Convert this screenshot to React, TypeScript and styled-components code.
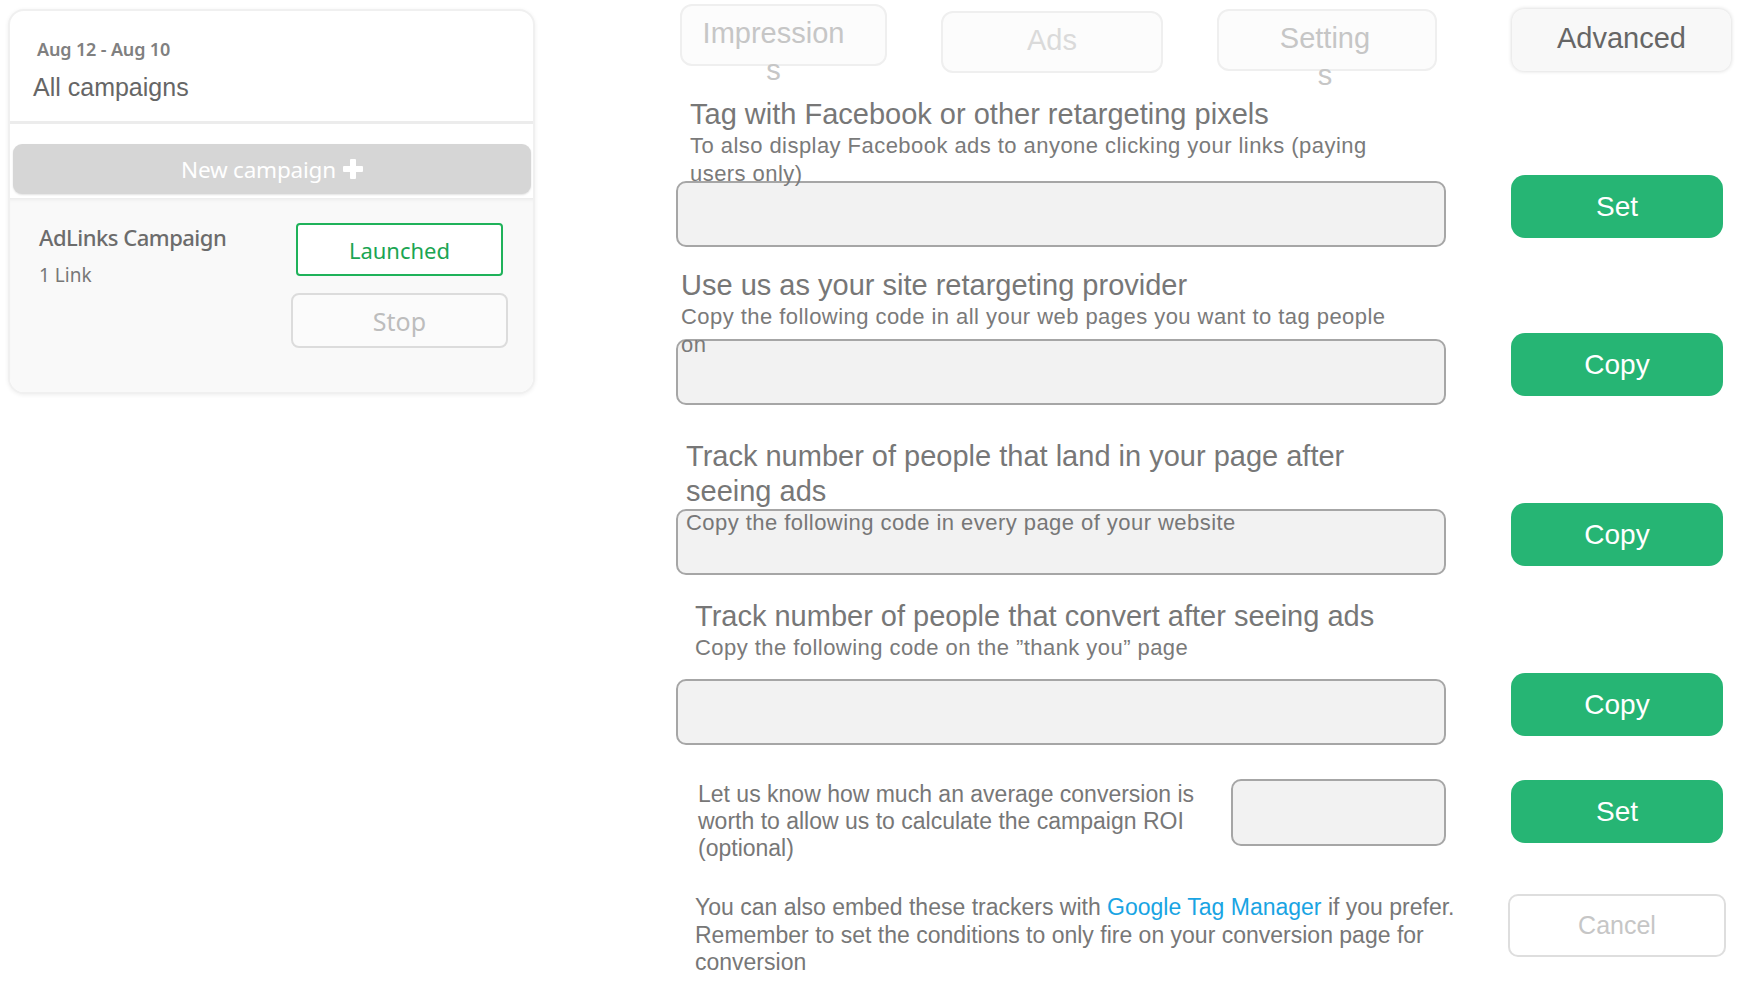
import React from "react";
import styled, { createGlobalStyle } from "styled-components";

const GlobalStyle = createGlobalStyle`
  html, body {
    margin: 0;
    padding: 0;
    background: #fff;
  }
  body {
    font-family: "Liberation Sans", Arial, sans-serif;
    color: #777;
  }
  * {
    box-sizing: border-box;
  }
`;

const condensed = `"Noto Sans", "Open Sans", sans-serif`;

const Page = styled.div`
  display: flex;
  align-items: flex-start;
  width: 1748px;
  height: 989px;
  overflow: hidden;
  padding-left: 8px;
`;

/* ---------- sidebar ---------- */

const Sidebar = styled.aside`
  width: 527px;
  margin-top: 9px;
  border: 2px solid #f0f0f0;
  border-radius: 16px;
  box-shadow: 0 1px 4px rgba(0, 0, 0, 0.07);
  background: #fff;
  overflow: hidden;
`;

const SidebarHeader = styled.header`
  height: 113px;
  padding: 27px 0 0 27px;
  border-bottom: 3px solid #ececec;
`;

const DateRange = styled.div`
  font-family: ${condensed};
  font-stretch: condensed;
  font-weight: 600;
  font-size: 18px;
  line-height: 22px;
  letter-spacing: -0.15px;
  color: #808080;
`;

const SidebarTitle = styled.div`
  margin: 12px 0 0 -4px;
  font-size: 25px;
  line-height: 30px;
  color: #666;
`;

const NewCampaign = styled.button`
  display: flex;
  align-items: center;
  justify-content: center;
  gap: 7px;
  width: calc(100% - 5px);
  height: 50px;
  margin: 20px 2px 0 3px;
  border: none;
  border-radius: 9px;
  background: #d6d6d6;
  box-shadow: 0 1px 2px rgba(0, 0, 0, 0.12);
  color: #fff;
  font-family: ${condensed};
  font-stretch: condensed;
  font-size: 22.5px;
  letter-spacing: -0.2px;
`;

const CampaignItem = styled.div`
  display: flex;
  justify-content: space-between;
  margin-top: 4px;
  padding: 25px 25px 44px 29px;
  background: #f9f9f9;
  box-shadow: inset 0 4px 4px -3px rgba(0, 0, 0, 0.08);
`;

const CampaignName = styled.div`
  font-family: ${condensed};
  font-stretch: condensed;
  font-weight: 500;
  font-size: 22px;
  line-height: 28px;
  letter-spacing: -0.5px;
  color: #6c6c6c;
`;

const CampaignMeta = styled.div`
  margin-top: 12px;
  font-family: ${condensed};
  font-stretch: condensed;
  font-size: 19px;
  line-height: 24px;
  color: #777;
`;

const ItemActions = styled.div`
  display: flex;
  flex-direction: column;
  align-items: center;
  gap: 17px;
  width: 217px;
`;

const StatusButton = styled.button<{ $variant: "launched" | "stop" }>`
  width: ${(p) => (p.$variant === "launched" ? 207 : 217)}px;
  height: ${(p) => (p.$variant === "launched" ? 53 : 55)}px;
  border: 2px solid ${(p) => (p.$variant === "launched" ? "#1fb25a" : "#dcdcdc")};
  border-radius: ${(p) => (p.$variant === "launched" ? 4 : 8)}px;
  background: ${(p) => (p.$variant === "launched" ? "#fff" : "#fbfbfb")};
  color: ${(p) => (p.$variant === "launched" ? "#1ba553" : "#bdbdbd")};
  font-family: ${condensed};
  font-stretch: condensed;
  font-size: ${(p) => (p.$variant === "launched" ? 22 : 25)}px;
`;

/* ---------- main panel ---------- */

const Main = styled.main`
  width: 1050px;
  margin-left: 141px;
`;

const Row = styled.div<{ $mt: number }>`
  display: grid;
  grid-template-columns: 770px 218px;
  column-gap: 62px;
  margin-top: ${(p) => p.$mt}px;
`;

const TabGroup = styled.div`
  display: flex;
  align-items: flex-start;
  justify-content: space-between;
  padding: 0 9px 0 4px;
`;

const Tab = styled.div<{
  $top: number;
  $width: number;
  $tone: string;
  $active?: boolean;
  $padRight?: number;
}>`
  width: ${(p) => p.$width}px;
  height: 62px;
  margin-top: ${(p) => p.$top}px;
  padding: 9px ${(p) => p.$padRight ?? 0}px 0 0;
  border: 2px solid ${(p) => (p.$active ? "transparent" : "#efefef")};
  border-radius: 12px;
  background: ${(p) => (p.$active ? "#f8f8f8" : "#fcfcfc")};
  box-shadow: ${(p) => (p.$active ? "0 0 4px rgba(0, 0, 0, 0.18)" : "none")};
  text-align: center;
  font-size: 29px;
  line-height: 37px;
  color: ${(p) => p.$tone};
`;

const Field = styled.div`
  display: flex;
  flex-direction: column;
`;

const Heading = styled.div<{ $indent: number }>`
  padding-left: ${(p) => p.$indent}px;
  font-size: 29px;
  line-height: 35px;
  color: #777;
  white-space: nowrap;
`;

const Hint = styled.div<{ $indent: number }>`
  position: relative;
  z-index: 1;
  padding-left: ${(p) => p.$indent}px;
  font-size: 22px;
  line-height: 28px;
  letter-spacing: 0.45px;
  color: #7a7a7a;
  white-space: nowrap;
`;

const CodeBox = styled.div<{ $mt?: number; $width?: number }>`
  width: ${(p) => (p.$width ? `${p.$width}px` : "100%")};
  height: ${(p) => (p.$width ? 67 : 66)}px;
  margin-top: ${(p) => p.$mt ?? 0}px;
  padding: 0 8px;
  border: 2px solid #a6a6a6;
  border-radius: 10px;
  background: #f2f2f2;
  font-size: 22px;
  line-height: 24px;
  letter-spacing: 0.45px;
  color: #777;
  white-space: nowrap;
`;

const ActionButton = styled.button<{ $top?: number }>`
  justify-self: center;
  align-self: ${(p) => (p.$top !== undefined ? "start" : "end")};
  width: 212px;
  height: 63px;
  margin-top: ${(p) => p.$top ?? 0}px;
  margin-bottom: ${(p) => (p.$top !== undefined ? 0 : 9)}px;
  border: none;
  border-radius: 14px;
  background: #26b574;
  color: #fff;
  font-family: "Liberation Sans", Arial, sans-serif;
  font-size: 28px;
`;

const CancelButton = styled.button`
  align-self: start;
  width: 218px;
  height: 63px;
  margin-top: 2px;
  border: 2px solid #dedede;
  border-radius: 10px;
  background: #fff;
  color: #c6c6c6;
  font-family: "Liberation Sans", Arial, sans-serif;
  font-size: 25px;
`;

const ValueRow = styled.div`
  display: flex;
  justify-content: space-between;
  align-items: flex-start;
`;

const Paragraph = styled.p<{ $indent: number; $lh: number }>`
  margin: 0;
  padding: 2px 0 0 ${(p) => p.$indent}px;
  font-size: 23px;
  line-height: ${(p) => p.$lh}px;
  color: #777;
  white-space: nowrap;
`;

const Link = styled.a`
  color: #19a4e3;
  text-decoration: none;
`;

const PlusIcon = () => (
  <svg width="20" height="20" viewBox="0 0 20 20" aria-hidden="true">
    <rect x="7" y="0" width="6" height="20" rx="1" fill="#fff" />
    <rect x="0" y="7" width="20" height="6" rx="1" fill="#fff" />
  </svg>
);

export default function App() {
  return (
    <>
      <GlobalStyle />
      <Page>
        <Sidebar>
          <SidebarHeader>
            <DateRange>Aug 12 - Aug 10</DateRange>
            <SidebarTitle>All campaigns</SidebarTitle>
          </SidebarHeader>
          <NewCampaign>
            New campaign <PlusIcon />
          </NewCampaign>
          <CampaignItem>
            <div>
              <CampaignName>AdLinks Campaign</CampaignName>
              <CampaignMeta>1 Link</CampaignMeta>
            </div>
            <ItemActions>
              <StatusButton $variant="launched">Launched</StatusButton>
              <StatusButton $variant="stop">Stop</StatusButton>
            </ItemActions>
          </CampaignItem>
        </Sidebar>

        <Main>
          <Row $mt={0}>
            <TabGroup>
              <Tab $top={4} $width={207} $tone="#c6c6c6" $padRight={20}>
                Impression
                <br />s
              </Tab>
              <Tab $top={11} $width={222} $tone="#dadada">
                Ads
              </Tab>
              <Tab $top={9} $width={220} $tone="#c6c6c6" $padRight={4}>
                Setting
                <br />s
              </Tab>
            </TabGroup>
            <Tab $top={9} $width={219} $tone="#666" $active style={{ marginLeft: 4 }}>
              Advanced
            </Tab>
          </Row>

          <Row $mt={24}>
            <Field>
              <Heading $indent={14}>Tag with Facebook or other retargeting pixels</Heading>
              <Hint $indent={14}>
                To also display Facebook ads to anyone clicking your links (paying
                <br />
                users only)
              </Hint>
              <CodeBox $mt={-7} />
            </Field>
            <ActionButton>Set</ActionButton>
          </Row>

          <Row $mt={21}>
            <Field>
              <Heading $indent={5}>Use us as your site retargeting provider</Heading>
              <Hint $indent={5}>
                Copy the following code in all your web pages you want to tag people
                <br />
                on
              </Hint>
              <CodeBox $mt={-20} />
            </Field>
            <ActionButton>Copy</ActionButton>
          </Row>

          <Row $mt={34}>
            <Field>
              <Heading $indent={10}>
                Track number of people that land in your page after
                <br />
                seeing ads
              </Heading>
              <CodeBox>Copy the following code in every page of your website</CodeBox>
            </Field>
            <ActionButton>Copy</ActionButton>
          </Row>

          <Row $mt={24}>
            <Field>
              <Heading $indent={19}>Track number of people that convert after seeing ads</Heading>
              <Hint $indent={19}>Copy the following code on the ”thank you” page</Hint>
              <CodeBox $mt={17} />
            </Field>
            <ActionButton>Copy</ActionButton>
          </Row>

          <Row $mt={34}>
            <ValueRow>
              <Paragraph $indent={22} $lh={27}>
                Let us know how much an average conversion is
                <br />
                worth to allow us to calculate the campaign ROI
                <br />
                (optional)
              </Paragraph>
              <CodeBox $width={215} />
            </ValueRow>
            <ActionButton $top={1}>Set</ActionButton>
          </Row>

          <Row $mt={30}>
            <Paragraph $indent={19} $lh={27.5}>
              You can also embed these trackers with <Link href="#">Google Tag Manager</Link> if you prefer.
              <br />
              Remember to set the conditions to only fire on your conversion page for
              <br />
              conversion
            </Paragraph>
            <CancelButton>Cancel</CancelButton>
          </Row>
        </Main>
      </Page>
    </>
  );
}
